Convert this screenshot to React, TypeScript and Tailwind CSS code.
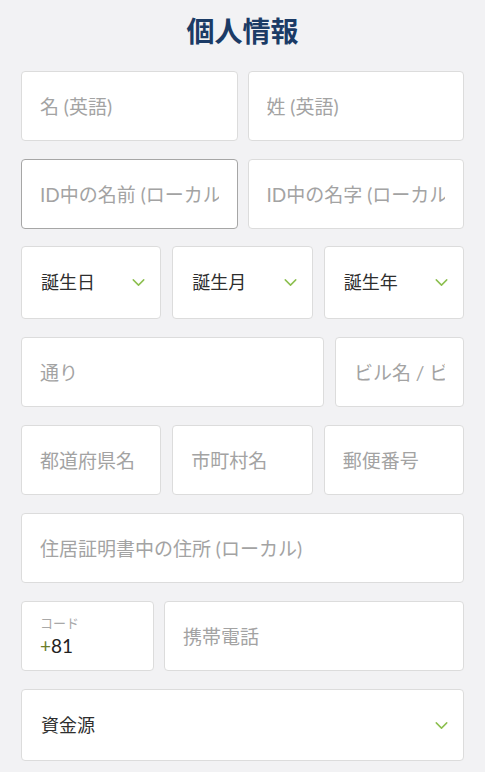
import { ChevronDown } from "lucide-react"

const font = { fontFamily: '"Lato", "Noto Sans CJK JP", sans-serif' }

function TextField({ placeholder, focused }: { placeholder: string; focused?: boolean }) {
  return (
    <input
      type="text"
      placeholder={placeholder}
      className={`h-[70px] w-full min-w-0 rounded-[4px] border bg-white pl-[18px] pr-[18px] text-[19px] text-[#333] outline-none placeholder:text-[#a3a3a3] ${
        focused ? "border-[#a6a6a6]" : "border-[#dcdcdc]"
      }`}
    />
  )
}

function SelectField({ label, tall }: { label: string; tall?: boolean }) {
  return (
    <div
      className={`flex w-full items-center justify-between rounded-[4px] border border-[#dcdcdc] bg-white pl-[19px] pr-[11px] ${
        tall ? "h-[72px]" : "h-[73px]"
      }`}
    >
      <span className="text-[18px] text-[#2e2e2e]">{label}</span>
      <ChevronDown size={21} strokeWidth={1.7} className="text-[#8cbf4f]" />
    </div>
  )
}

export default function App() {
  return (
    <div className="min-h-[772px] bg-[#f2f2f4] px-[21px]" style={font}>
      <h1 className="pt-[11px] mb-[20px] h-[51px] text-center text-[28px] leading-[40px] font-bold text-[#1b3b66]">
        個人情報
      </h1>

      <div className="flex flex-col gap-[18px]">
        <div className="grid grid-cols-2 gap-[10px]">
          <TextField placeholder="名 (英語)" />
          <TextField placeholder="姓 (英語)" />
        </div>

        <div className="grid grid-cols-2 gap-[10px] -mb-px">
          <TextField placeholder="ID中の名前 (ローカル)" focused />
          <TextField placeholder="ID中の名字 (ローカル)" />
        </div>

        <div className="grid grid-cols-3 gap-[11px]">
          <SelectField label="誕生日" />
          <SelectField label="誕生月" />
          <SelectField label="誕生年" />
        </div>

        <div className="grid grid-cols-[303px_1fr] gap-[11px]">
          <TextField placeholder="通り" />
          <TextField placeholder="ビル名 / ビル番号" />
        </div>

        <div className="grid grid-cols-3 gap-[11px]">
          <TextField placeholder="都道府県名" />
          <TextField placeholder="市町村名" />
          <TextField placeholder="郵便番号" />
        </div>

        <TextField placeholder="住居証明書中の住所 (ローカル)" />

        <div className="grid grid-cols-[133px_1fr] gap-[10px]">
          <div className="flex h-[70px] flex-col justify-center rounded-[4px] border border-[#dcdcdc] bg-white pl-[18px]">
            <span className="text-[13px] leading-[16px] text-[#a8a8a8]">コード</span>
            <span className="mt-[4px] text-[19px] leading-[22px] text-[#222]">
              <span className="text-[#6b7d2a]">+</span>81
            </span>
          </div>
          <TextField placeholder="携帯電話" />
        </div>

        <SelectField label="資金源" tall />
      </div>
    </div>
  )
}
